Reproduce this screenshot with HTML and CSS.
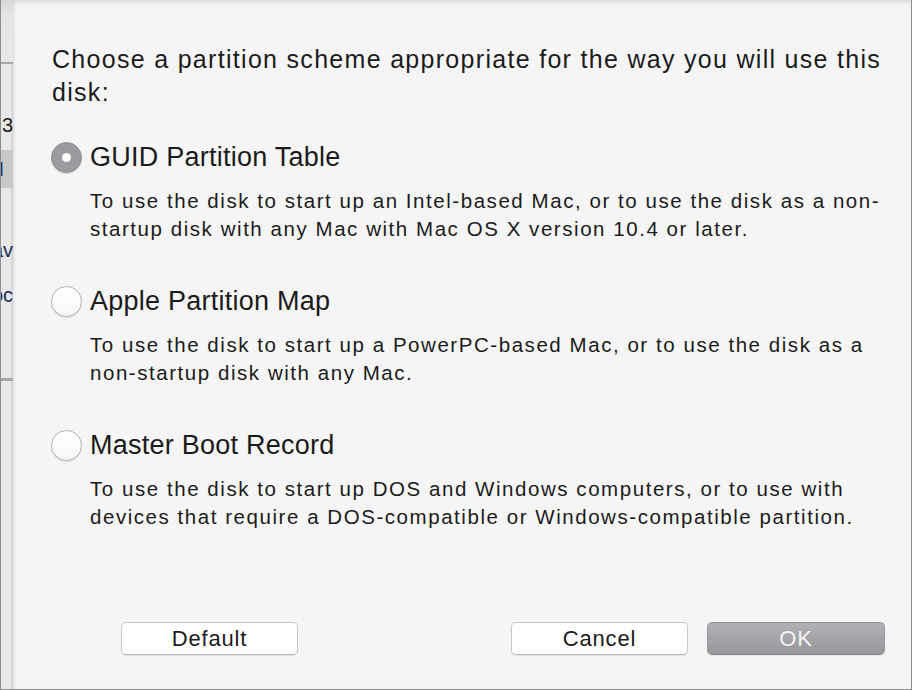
FILE: index.html
```html
<!DOCTYPE html>
<html lang="en">
<head>
  <meta charset="UTF-8" />
  <title>Partition Options</title>
  <link rel="stylesheet" href="styles.css">
</head>
<body>

 <div class="screen">

  <!-- finestra dietro lo sheet (si vede solo il bordo) -->
  <div class="behind">
    <div class="behind-top"></div>
    <div class="behind-row row-num">3</div>
    <div class="behind-row row-sel">N</div>
    <div class="behind-row row-a">av</div>
    <div class="behind-row row-b">oc</div>
    <div class="behind-rest"></div>
  </div>

  <div class="sheet">
    <p class="prompt">Choose a partition scheme appropriate for the way you will use this disk:</p>

    <div class="options">
      <div class="option">
        <label class="option-title"><span class="radio checked"></span>GUID Partition Table</label>
        <p class="option-desc">To use the disk to start up an Intel-based Mac, or to use the disk as a non-startup disk with any Mac with Mac OS X version 10.4 or later.</p>
      </div>
      <div class="option">
        <label class="option-title"><span class="radio"></span>Apple Partition Map</label>
        <p class="option-desc">To use the disk to start up a PowerPC-based Mac, or to use the disk as a non-startup disk with any Mac.</p>
      </div>
      <div class="option">
        <label class="option-title"><span class="radio"></span>Master Boot Record</label>
        <p class="option-desc">To use the disk to start up DOS and Windows computers, or to use with devices that require a DOS-compatible or Windows-compatible partition.</p>
      </div>
    </div>

    <div class="buttons">
      <button class="btn">Default</button>
      <div class="btn-group">
        <button class="btn">Cancel</button>
        <button class="btn btn-ok">OK</button>
      </div>
    </div>
  </div>

 </div>

</body>
</html>
```

FILE: styles.css
```css
/* base */
body {
  margin: 0;
  font-family: "Helvetica Neue", "Liberation Sans", Arial, sans-serif;
  color: #1b1b1b;
  background: #f5f5f5;
}
.screen {
  width: 910px;
  height: 689px;
  display: flex;
  border-left: 1px solid #8e8e8e;
  border-right: 1px solid #8e8e8e;
  border-bottom: 1px solid #8e8e8e;
  overflow: hidden;
}

/* finestra dietro */
.behind {
  width: 12px;
  flex-shrink: 0;
  display: flex;
  flex-direction: column;
  background: linear-gradient(to right, #e7e7e7 0, #e9e9e9 9px, #cfcfcf 12px);
  font-size: 20px;
  color: #1b1b1b;
}
.behind-top {
  height: 62px;
  border-bottom: 2px solid #a9a9a9;
  background: linear-gradient(to bottom, #d8d8d8 0, #e6e6e6 18px, #e8e8e8 100%);
}
.behind-row {
  height: 38px;
  line-height: 38px;
  white-space: nowrap;
  overflow: hidden;
  direction: rtl;
  color: #1c2b55;
}
.row-num {
  margin-top: 49px;
  height: 24px;
  line-height: 24px;
  color: #1b1b1b;
}
.row-sel {
  margin-top: 13px;
  background: #c9c9c9;
  text-indent: 9px;
}
.row-a {
  margin-top: 43px;
}
.row-b {
  margin-top: 7px;
}
.behind-rest {
  margin-top: 64px;
  border-top: 3px solid #a7a7a7;
  flex: 1;
}

/* sheet */
.sheet {
  flex: 1;
  min-width: 0;
  display: flex;
  flex-direction: column;
  padding: 43px 14px 34px 39px;
  background: #f5f5f5;
  box-shadow: inset 0 5px 5px -3px rgba(0,0,0,0.12), inset 3px 0 3px -2px rgba(0,0,0,0.10);
}
.prompt {
  margin: 0;
  font-size: 25px;
  line-height: 33px;
  letter-spacing: 1.3px;
}

.options {
  margin-top: 32px;
  display: flex;
  flex-direction: column;
  gap: 42px;
}
.option-title {
  display: flex;
  align-items: center;
  gap: 8px;
  font-size: 27px;
  line-height: 32px;
  letter-spacing: 0.25px;
  margin-left: -1px;
}
.option-desc {
  margin: 14px 0 0 38px;
  font-size: 20.5px;
  line-height: 28px;
  letter-spacing: 1.55px;
}

/* radio */
.radio {
  width: 29px;
  height: 29px;
  flex-shrink: 0;
  border-radius: 50%;
  border: 1px solid #b4b4b4;
  background: linear-gradient(#ffffff, #f6f6f6);
  box-shadow: 0 1px 1px rgba(0,0,0,0.12);
  display: flex;
  align-items: center;
  justify-content: center;
}
.radio.checked {
  border-color: #939397;
  background: #9b9a9f;
}
.radio.checked::after {
  content: "";
  width: 9px;
  height: 9px;
  border-radius: 50%;
  background: #ffffff;
}

/* pulsanti */
.buttons {
  margin-top: auto;
  margin-left: 69px;
  margin-right: 12px;
  display: flex;
  justify-content: space-between;
}
.btn-group {
  display: flex;
  gap: 19px;
}
.btn {
  width: 177px;
  height: 33px;
  padding: 0;
  font-family: inherit;
  font-size: 22px;
  letter-spacing: 0.8px;
  color: #1b1b1b;
  background: #ffffff;
  border: 1px solid #c9c9c9;
  border-bottom-color: #b5b5b5;
  border-radius: 5px;
  box-shadow: 0 1px 1px rgba(0,0,0,0.08);
}
.btn-ok {
  width: 178px;
  color: #f4f4f4;
  background: linear-gradient(#b2b1b5, #97969b);
  border-color: #98979b;
  border-bottom-color: #8a898d;
}
```
